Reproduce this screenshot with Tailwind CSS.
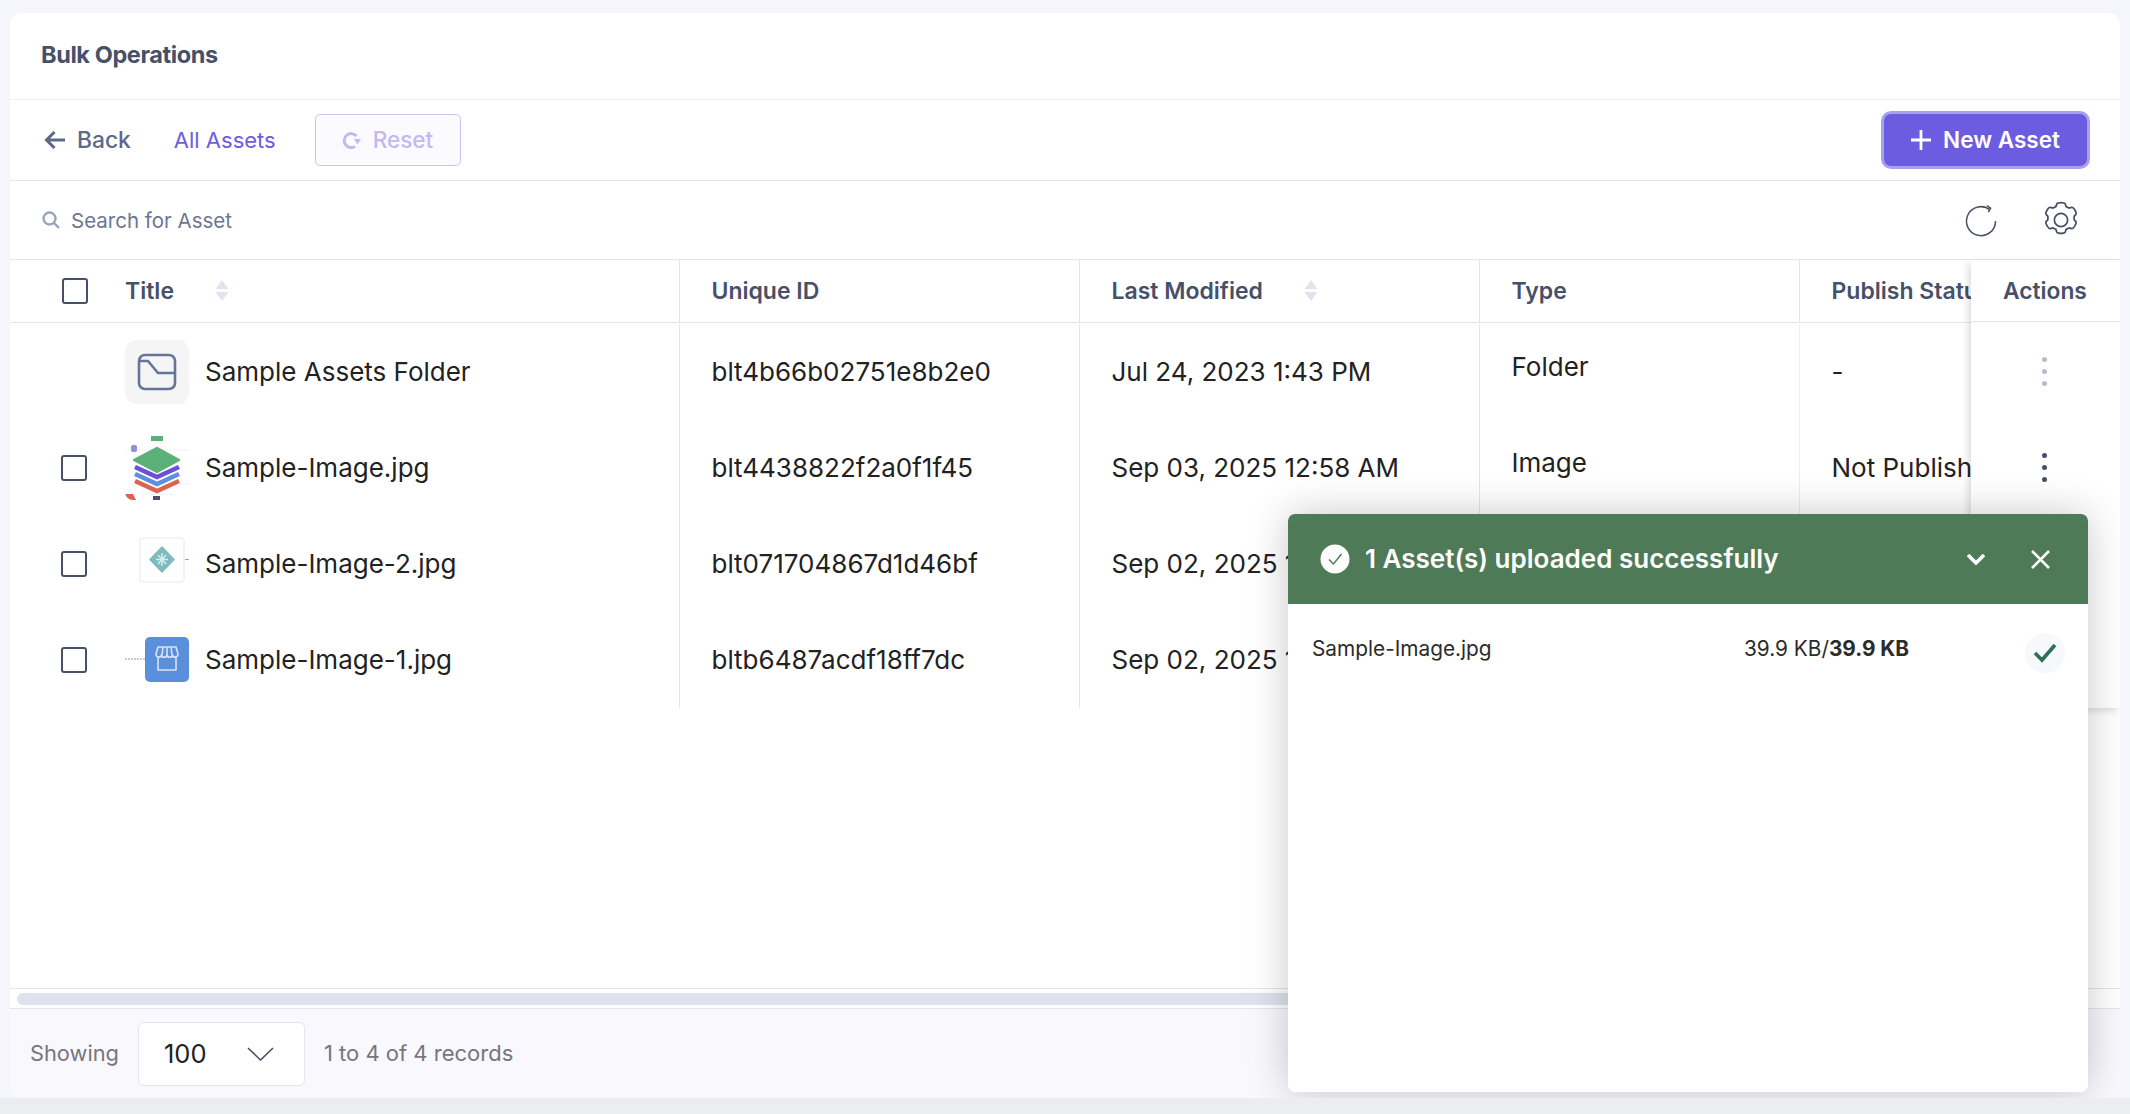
<!DOCTYPE html>
<html lang="en">
<head>
  <meta charset="UTF-8">
  <title>Bulk Operations</title>
  <script src="https://cdn.jsdelivr.net/npm/@tailwindcss/browser@4"></script>
</head>
<body class="h-[1114px] overflow-hidden bg-[#f4f6fb] font-['Inter',sans-serif]">
  <div class="pt-[13px] px-[10px] h-[1114px] bg-[#ebedf1]">
  <div class="absolute inset-x-0 top-0 h-[1098px] bg-[#f5f6fb]"></div>
  <div class="relative flex h-[1085px] flex-col overflow-hidden rounded-[11px] bg-white">

    <!-- Page title -->
    <div class="flex h-[87px] shrink-0 items-center border-b border-[#eff1f7] pl-[31px] pb-[3px]">
      <h1 class="text-[23.500px] font-bold tracking-[-0.4px] text-[#475069]">Bulk Operations</h1>
    </div>

    <!-- Toolbar -->
    <div class="flex h-[81px] shrink-0 items-center border-b border-[#e3e6f0] pl-[34px] pr-[33px]">
      <svg class="mr-[11px] h-[22px] w-[22px] text-[#5d6789]" viewBox="0 0 22 22" fill="none" stroke="currentColor" stroke-width="3"><path d="M21 11H3M10.500 3 2.500 11l8 8"/></svg>
      <span class="text-[22.800px] font-medium text-[#5d6789]">Back</span>
      <span class="ml-[43px] text-[22px] text-[#6c5ce0]">All Assets</span>
      <div class="ml-[39px] flex h-[52px] w-[146px] items-center rounded-[5px] border border-[#c9c3f5] bg-[#fbfaff] pl-[25px]">
        <svg class="mr-[12px] h-[20px] w-[20px] text-[#c0b9f3]" viewBox="0 0 20 20" fill="none" stroke="currentColor" stroke-width="3"><path d="M15.500 6A7 7 0 1 0 14 16.500"/><path d="M13 9h7l-3.500 5.500z" fill="currentColor" stroke="none"/></svg>
        <span class="text-[22.500px] font-medium text-[#c0b9f3]">Reset</span>
      </div>
      <button class="ml-auto flex h-[52px] w-[203px] items-center justify-center gap-[12px] rounded-[7px] bg-[#6c5ce0] text-[22.500px] font-semibold text-white ring-[3px] ring-[#a9a1ef]">
        <svg class="h-[20px] w-[20px]" viewBox="0 0 20 20" stroke="currentColor" stroke-width="2.800"><path d="M10 0v20M0 10h20"/></svg>
        New Asset
      </button>
    </div>

    <!-- Search -->
    <div class="flex h-[79px] shrink-0 items-center border-b border-[#e3e6f0] pl-[32px] pr-[38px]">
      <svg class="mr-[11px] h-[18px] w-[18px] text-[#9aa3ba]" viewBox="0 0 18 18" fill="none" stroke="currentColor" stroke-width="2.400"><circle cx="7.500" cy="7.500" r="6"/><path d="m12 12 5 5"/></svg>
      <span class="pt-[2px] text-[20.500px] text-[#6c7693]">Search for Asset</span>
      <svg class="ml-auto h-[34px] w-[34px] text-[#475069]" viewBox="0 0 34 34" fill="none" stroke="currentColor" stroke-width="1.500"><path d="M26 6.800A14.500 14.500 0 1 0 31.500 18"/><path d="m23 2.500 3.600 2.800-2.300 3.800"/></svg>
      <svg class="ml-[42px] h-[42px] w-[42px] text-[#475069]" viewBox="0 0 24 24" fill="none" stroke="currentColor" stroke-width="1"><path d="M9.600 2.800c.5-1 4.300-1 4.800 0l.5 1.500 1.700.9 1.500-.4c1.100-.3 3 3 2.400 4l-1 1.100v1.900l1 1.100c.6 1-1.300 4.300-2.400 4l-1.500-.4-1.700.9-.5 1.500c-.5 1-4.300 1-4.800 0l-.5-1.500-1.700-.9-1.500.4c-1.100.3-3-3-2.400-4l1-1.100v-1.900l-1-1.100c-.6-1 1.300-4.300 2.400-4l1.500.4 1.700-.9z"/><circle cx="12" cy="12" r="3.800"/></svg>
    </div>

    <!-- Table -->
    <div class="flex h-[728px] shrink-0 items-start">
      <div class="w-[1961px] shrink-0 overflow-hidden">
        <table class="w-[2089px] table-fixed border-collapse text-[26px] text-[#222222]">
          <colgroup>
            <col class="w-[669px]"><col class="w-[400px]"><col class="w-[400px]"><col class="w-[320px]"><col class="w-[300px]">
          </colgroup>
          <thead>
            <tr class="h-[62px] border-b border-[#e3e6f0] text-left text-[23px] font-semibold text-[#475069]">
              <th class="font-semibold">
                <div class="flex items-center pl-[52px]">
                  <span class="h-[26px] w-[26px] rounded-[3px] border-2 border-[#475069]"></span>
                  <span class="ml-[37px]">Title</span>
                  <svg class="ml-[41px] h-[21px] w-[14px] text-[#dfe4ee]" viewBox="0 0 13 21" fill="currentColor"><path d="M6.500 0 13 9H0zM0 12h13l-6.500 9z"/></svg>
                </div>
              </th>
              <th class="border-l border-[#e3e6f0] pl-[32px] font-semibold">Unique ID</th>
              <th class="border-l border-[#e3e6f0] pl-[32px] font-semibold">
                <div class="flex items-center">
                  <span>Last Modified</span>
                  <svg class="ml-[41px] h-[21px] w-[14px] text-[#dfe4ee]" viewBox="0 0 13 21" fill="currentColor"><path d="M6.500 0 13 9H0zM0 12h13l-6.500 9z"/></svg>
                </div>
              </th>
              <th class="border-l border-[#e3e6f0] pl-[32px] font-semibold">Type</th>
              <th class="border-l border-[#e3e6f0] pl-[32px] font-semibold whitespace-nowrap">Publish Status</th>
            </tr>
            <tr class="h-[2px]"><td colspan="5"></td></tr>
          </thead>
          <tbody>
            <tr class="h-[96px]">
              <td>
                <div class="flex items-center pl-[115px]">
                  <div class="flex h-[64px] w-[64px] items-center justify-center rounded-[11px] bg-[#f5f5f5]">
                    <svg class="h-[40px] w-[40px] text-[#65749a]" viewBox="0 0 40 40" fill="none" stroke="currentColor" stroke-width="2.600"><rect x="2" y="3" width="36" height="34" rx="6"/><path d="M2 9h9l10 12h17"/></svg>
                  </div>
                  <span class="ml-[16px] mb-[2px]">Sample Assets Folder</span>
                </div>
              </td>
              <td class="border-l border-[#e3e6f0] pl-[32px] pb-[2px]">blt4b66b02751e8b2e0</td>
              <td class="border-l border-[#e3e6f0] pl-[32px] pb-[2px]">Jul 24, 2023 1:43 PM</td>
              <td class="border-l border-[#e3e6f0] pl-[32px] pb-[12px]">Folder</td>
              <td class="border-l border-[#eceef5] pl-[32px] pb-[2px]">-</td>
            </tr>
            <tr class="h-[96px]">
              <td>
                <div class="flex items-center pl-[51px]">
                  <span class="h-[26px] w-[26px] rounded-[3px] border-2 border-[#475069]"></span>
                  <svg class="ml-[38px] h-[64px] w-[64px] overflow-hidden rounded-[8px]" viewBox="0 0 64 64">
                    <rect width="64" height="64" fill="#fff"/>
                    <path d="M0 14h64M4 48h6M54 48h10M16 58h34" stroke="#f0f2f6" stroke-width="1"/>
                    <rect x="26" y="0" width="12" height="5" fill="#5cb07a"/>
                    <rect x="6" y="9" width="6" height="7" rx="2" fill="#8d8fe0"/>
                    <path d="M10 45 32 55 54 45" fill="none" stroke="#d9644f" stroke-width="4.500"/>
                    <path d="M10 38 32 48 54 38" fill="none" stroke="#5e8fdc" stroke-width="4.500"/>
                    <path d="M10 31 32 41 54 31" fill="none" stroke="#6b4fdc" stroke-width="4.500"/>
                    <path d="M9 24 32 12 54 24 32 36z" fill="#5cb07a" stroke="#5cb07a" stroke-width="2.500" stroke-linejoin="round"/>
                    <path d="M0 58h8l3 6H0z" fill="#d9644f"/>
                    <path d="M28 60h7v4h-7z" fill="#475069"/>
                  </svg>
                  <span class="ml-[16px] mb-[2px]">Sample-Image.jpg</span>
                </div>
              </td>
              <td class="border-l border-[#e3e6f0] pl-[32px] pb-[2px]">blt4438822f2a0f1f45</td>
              <td class="border-l border-[#e3e6f0] pl-[32px] pb-[2px]">Sep 03, 2025 12:58 AM</td>
              <td class="border-l border-[#e3e6f0] pl-[32px] pb-[12px]">Image</td>
              <td class="border-l border-[#eceef5] pl-[32px] pb-[2px] whitespace-nowrap">Not Published</td>
            </tr>
            <tr class="h-[96px]">
              <td>
                <div class="flex items-center pl-[51px]">
                  <span class="h-[26px] w-[26px] rounded-[3px] border-2 border-[#475069]"></span>
                  <svg class="ml-[38px] h-[64px] w-[64px]" viewBox="0 0 64 64">
                    <rect x="15" y="6" width="44" height="44" rx="3" fill="#fff" stroke="#f0f1f4" stroke-width="1.500"/>
                    <path d="M37 15 49 27.500 37 40 25 27.500z" fill="#7cbcc0" stroke="#7cbcc0" stroke-width="1.500" stroke-linejoin="round"/>
                    <path d="M31 27.500h12M37 21v13M33 23l8 9M41 23l-8 9" stroke="#d6eced" stroke-width="1.500"/>
                    <path d="M60 27.500h4" stroke="#9ca3af" stroke-width="1"/>
                  </svg>
                  <span class="ml-[16px] mb-[2px]">Sample-Image-2.jpg</span>
                </div>
              </td>
              <td class="border-l border-[#e3e6f0] pl-[32px] pb-[2px]">blt071704867d1d46bf</td>
              <td class="border-l border-[#e3e6f0] pl-[32px] pb-[2px]">Sep 02, 2025 1:20 PM</td>
              <td class="border-l border-[#e3e6f0] pl-[32px] pb-[12px]">Image</td>
              <td class="border-l border-[#eceef5] pl-[32px] pb-[2px] whitespace-nowrap">Not Published</td>
            </tr>
            <tr class="h-[96px]">
              <td>
                <div class="flex items-center pl-[51px]">
                  <span class="h-[26px] w-[26px] rounded-[3px] border-2 border-[#475069]"></span>
                  <svg class="ml-[38px] h-[64px] w-[64px]" viewBox="0 0 64 64">
                    <path d="M0 31h20" stroke="#b8bcc6" stroke-width="1.500" stroke-dasharray="2 1"/>
                    <rect x="20" y="9" width="44" height="45" rx="5" fill="#5b8fdc"/>
                    <path d="M31 26l2-7h18l2 7c0 4-5 4-5.500 1-.5 3-5 3-5.500 0-.5 3-5 3-5.500 0-.5 3-5.500 3-5.500-1zM33 30v12h18V30M38 19l-1 8M42 19v8M46 19l1 8" fill="none" stroke="#d6e4f8" stroke-width="1.600" stroke-linejoin="round"/>
                  </svg>
                  <span class="ml-[16px] mb-[2px]">Sample-Image-1.jpg</span>
                </div>
              </td>
              <td class="border-l border-[#e3e6f0] pl-[32px] pb-[2px]">bltb6487acdf18ff7dc</td>
              <td class="border-l border-[#e3e6f0] pl-[32px] pb-[2px]">Sep 02, 2025 1:20 PM</td>
              <td class="border-l border-[#e3e6f0] pl-[32px] pb-[12px]">Image</td>
              <td class="border-l border-[#eceef5] pl-[32px] pb-[2px] whitespace-nowrap">Not Published</td>
            </tr>
          </tbody>
        </table>
      </div>

      <!-- Actions column, pinned on the right -->
      <div class="relative w-[149px] shrink-0 bg-white shadow-[-3px_3px_7px_rgba(0,0,0,0.13)]">
        <div class="flex h-[62px] items-center border-b border-[#e3e6f0] pl-[32px] pt-[2px] text-[22.800px] font-semibold text-[#475069]">Actions</div>
        <div class="h-[2px]"></div>
        <div class="flex h-[96px] flex-col items-center justify-center gap-[7px] pr-[2px] pb-[2px]">
          <span class="h-[5px] w-[5px] rounded-full bg-[#b7bccd]"></span><span class="h-[5px] w-[5px] rounded-full bg-[#b7bccd]"></span><span class="h-[5px] w-[5px] rounded-full bg-[#b7bccd]"></span>
        </div>
        <div class="flex h-[96px] flex-col items-center justify-center gap-[7px] pr-[2px] pb-[2px]">
          <span class="h-[5px] w-[5px] rounded-full bg-[#475069]"></span><span class="h-[5px] w-[5px] rounded-full bg-[#475069]"></span><span class="h-[5px] w-[5px] rounded-full bg-[#475069]"></span>
        </div>
        <div class="h-[192px]"></div>
      </div>
    </div>

    <!-- Horizontal scrollbar -->
    <div class="flex h-[21px] shrink-0 items-center border-y border-[#e3e6f0] pl-[7px]">
      <div class="h-[12px] w-[1500px] rounded-full bg-[#dde2ec]"></div>
    </div>

    <!-- Pagination -->
    <div class="flex flex-1 items-center bg-[#f8f8fd] pl-[20px]">
      <span class="text-[21.800px] text-[#77757f]">Showing</span>
      <div class="ml-[19px] flex h-[64px] w-[167px] items-center rounded-[6px] border border-[#e3e6f0] bg-white pl-[25px]">
        <span class="pt-[1px] text-[25.500px] text-[#222222]">100</span>
        <svg class="ml-[41px] h-[14px] w-[27px] text-[#475069]" viewBox="0 0 27 14" fill="none" stroke="currentColor" stroke-width="1.600"><path d="m1 1 12.500 12L26 1"/></svg>
      </div>
      <span class="ml-[19px] text-[22px] text-[#77757f]">1 to 4 of 4 records</span>
    </div>

    <!-- Upload status toast -->
    <div class="absolute right-[32px] bottom-[6px] h-[578px] w-[800px] rounded-[7px] bg-white shadow-[0_0_40px_rgba(0,0,0,0.22)]">
      <div class="flex h-[90px] items-center rounded-t-[7px] bg-[#4f7a57] pl-[32px] pr-[38px]">
        <svg class="h-[30px] w-[30px]" viewBox="0 0 30 30"><circle cx="15" cy="15" r="14.500" fill="#fff"/><path d="m9 15.500 4.500 4.500L21.500 10" fill="none" stroke="#4f7a57" stroke-width="1.500"/></svg>
        <span class="ml-[15px] mb-[2px] text-[26px] font-semibold text-white">1 Asset(s) uploaded successfully</span>
        <svg class="ml-auto h-[13px] w-[20px] text-white" viewBox="0 0 20 13" fill="none" stroke="currentColor" stroke-width="3.600"><path d="m2 2 8 8 8-8"/></svg>
        <svg class="ml-[45px] h-[19px] w-[19px] text-white" viewBox="0 0 19 19" fill="none" stroke="currentColor" stroke-width="2.600"><path d="m1 1 17 17M18 1 1 18"/></svg>
      </div>
      <div class="flex items-start pl-[24px] pr-[23px] pt-[29px] text-[20.800px] text-[#2b2b2b]">
        <span class="w-[432px]">Sample-Image.jpg</span>
        <span>39.9 KB/<b class="font-bold">39.9 KB</b></span>
        <div class="ml-auto flex h-[40px] w-[40px] items-center justify-center rounded-full bg-[#f7f8fc]">
          <svg class="h-[20px] w-[24px] text-[#2f6f52]" viewBox="0 0 24 20" fill="none" stroke="currentColor" stroke-width="3.600"><path d="m2 10 7 7L22 2"/></svg>
        </div>
      </div>
    </div>
  </div>
  </div>
</body>
</html>
